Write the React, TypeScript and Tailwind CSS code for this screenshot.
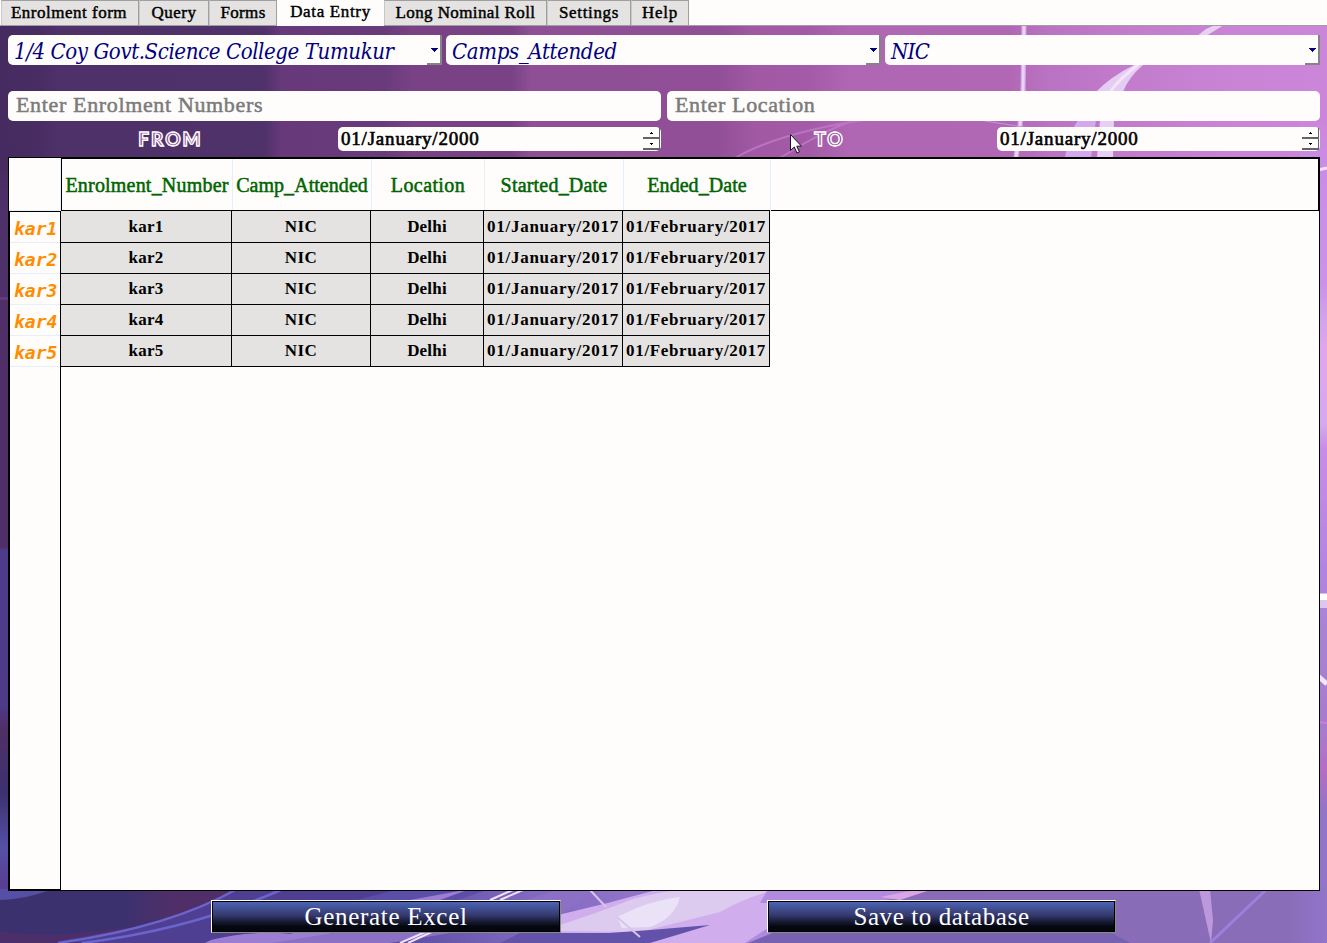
import React from "react";

const tabs = [
  { label: "Enrolment form", box: "w-[138px]", text: "tracking-[0.5px] pr-[2px]" },
  { label: "Query", box: "w-[70px]", text: "tracking-[0.5px]" },
  { label: "Forms", box: "w-[68px]", text: "tracking-[0.35px]" },
  { label: "Data Entry", box: "w-[107px]", text: "tracking-[0.65px]", active: true },
  { label: "Long Nominal Roll", box: "w-[163px]", text: "tracking-[0.4px]" },
  { label: "Settings", box: "w-[84px]", text: "tracking-[0.65px]" },
  { label: "Help", box: "w-[58px]", text: "tracking-[0.8px]" },
];

const rows = ["kar1", "kar2", "kar3", "kar4", "kar5"];

const columns = "grid grid-cols-[171px_139px_113px_139px_147px]";

function Backdrop() {
  return (
    <svg className="absolute inset-0 h-full w-full" viewBox="0 0 1327 943" preserveAspectRatio="none" aria-hidden="true">
      <defs>
        <linearGradient id="top" x1="0" x2="1327" y1="0" y2="0" gradientUnits="userSpaceOnUse">
          <stop offset="0" stopColor="#452b60" />
          <stop offset=".03" stopColor="#482d63" />
          <stop offset=".045" stopColor="#4f3169" />
          <stop offset=".2" stopColor="#50326a" />
          <stop offset=".212" stopColor="#67397a" />
          <stop offset=".29" stopColor="#693b7b" />
          <stop offset=".31" stopColor="#784284" />
          <stop offset=".385" stopColor="#784284" />
          <stop offset=".4" stopColor="#8f4f95" />
          <stop offset=".54" stopColor="#904f96" />
          <stop offset=".57" stopColor="#a259a4" />
          <stop offset=".61" stopColor="#a45ba7" />
          <stop offset=".64" stopColor="#b067b3" />
          <stop offset=".76" stopColor="#b168b4" />
          <stop offset=".79" stopColor="#ba73c2" />
          <stop offset=".85" stopColor="#c27ccb" />
          <stop offset=".93" stopColor="#ca84d6" />
          <stop offset="1" stopColor="#cb86d9" />
        </linearGradient>
        <linearGradient id="left" x1="0" x2="0" y1="150" y2="943" gradientUnits="userSpaceOnUse">
          <stop offset="0" stopColor="#452b60" />
          <stop offset=".08" stopColor="#4e3169" />
          <stop offset=".185" stopColor="#4e3169" />
          <stop offset=".187" stopColor="#733d80" />
          <stop offset=".19" stopColor="#502f69" />
          <stop offset=".5" stopColor="#502f69" />
          <stop offset=".505" stopColor="#4e3c8a" />
          <stop offset=".7" stopColor="#4e3a87" />
          <stop offset=".73" stopColor="#502f68" />
          <stop offset=".81" stopColor="#3c316f" />
          <stop offset=".88" stopColor="#5650a7" />
          <stop offset=".93" stopColor="#563d91" />
          <stop offset="1" stopColor="#433981" />
        </linearGradient>
        <linearGradient id="right" x1="0" x2="0" y1="120" y2="943" gradientUnits="userSpaceOnUse">
          <stop offset="0" stopColor="#cb86d9" />
          <stop offset=".06" stopColor="#c98de8" />
          <stop offset=".2" stopColor="#cc91e8" />
          <stop offset=".24" stopColor="#d1a3eb" />
          <stop offset=".28" stopColor="#e2a5ec" />
          <stop offset=".37" stopColor="#d5a9ee" />
          <stop offset=".4" stopColor="#c88ce7" />
          <stop offset=".55" stopColor="#b184e1" />
          <stop offset=".62" stopColor="#a783d4" />
          <stop offset=".74" stopColor="#a77bcf" />
          <stop offset=".79" stopColor="#b46ec2" />
          <stop offset=".84" stopColor="#9274c9" />
          <stop offset=".93" stopColor="#9274c9" />
          <stop offset="1" stopColor="#896cb7" />
        </linearGradient>
        <linearGradient id="bottom" x1="0" x2="1327" y1="0" y2="0" gradientUnits="userSpaceOnUse">
          <stop offset="0" stopColor="#3c316f" />
          <stop offset=".095" stopColor="#3c316f" />
          <stop offset=".13" stopColor="#502f68" />
          <stop offset=".17" stopColor="#502f68" />
          <stop offset=".19" stopColor="#4e3b87" />
          <stop offset=".3" stopColor="#5a4da3" />
          <stop offset=".4" stopColor="#8069c0" />
          <stop offset=".48" stopColor="#9274c9" />
          <stop offset=".57" stopColor="#b28be0" />
          <stop offset=".64" stopColor="#896cb7" />
          <stop offset=".97" stopColor="#8a6db8" />
          <stop offset="1" stopColor="#9274c9" />
        </linearGradient>
      </defs>
      <rect width="1327" height="160" fill="url(#top)" />
      <rect y="150" width="20" height="750" fill="url(#left)" />
      <rect x="1300" y="120" width="27" height="780" fill="url(#right)" />
      <rect y="889" width="1327" height="54" fill="url(#bottom)" />
      {/* light streaks across the upper edge */}
      <path d="M1024 25 L1023 92 L1020 125 L1016 158" fill="none" stroke="#d9aeea" strokeWidth="5" />
      <path d="M1024 25 L1023 92 L1020 125 L1016 158" fill="none" stroke="#e8d5f4" strokeWidth="2.5" />
      <path d="M1206 29 L1215 25 L1224 25 L1206 36 L1192 40Z" fill="#e8cff4" />
      <path d="M1134 65 L1143 65 Q1128 78 1123 92 L1096 92 Q1110 77 1134 65Z" fill="#e4cdf2" />
      <path d="M1138 65 Q1120 78 1110 92" fill="none" stroke="#f5e3fa" strokeWidth="3" />
      <path d="M1078 120 L1096 120 L1091 158 L1065 158 Q1068 135 1078 120Z" fill="#d4a9ec" />
      <path d="M1100 120 L1114 120 L1113 158 L1097 158Z" fill="#e6cff3" />
      <path d="M735 158 Q780 132 870 119 M780 158 Q825 130 850 122" fill="none" stroke="#c27bcb" strokeWidth="2" opacity=".75" />
      <path d="M985 121 L1030 128" stroke="#c793da" strokeWidth="1" />
      {/* right-hand flares */}
      <path d="M1318 170 L1327 168" stroke="#f3dff8" strokeWidth="3" />
      <path d="M1318 597 L1327 597" stroke="#fff" strokeWidth="7" />
      <path d="M1318 604 L1327 604" stroke="#dfc6ee" strokeWidth="8" />
      <path d="M1318 676 L1327 684" stroke="#f3e5fb" strokeWidth="5" />
      <path d="M1318 722 L1327 723" stroke="#d57bd0" strokeWidth="2" />
      {/* lower-left bands */}
      <path d="M0 880 L52 889 Q30 899 0 900Z" fill="#5a3e91" />
      <path d="M0 900 Q30 898 52 889 L0 889Z" fill="#564fa6" />
      <path d="M0 931 Q20 935 60 935 L150 925 L100 943 L0 943Z" fill="#4c2f6a" />
      <path d="M235 889 Q190 918 110 932 L60 941 L85 943 L330 943 L420 889Z" fill="#4e3f92" />
      <path d="M58 943 Q170 927 237 889 M82 943 Q190 930 283 889" fill="none" stroke="#6b64cb" strokeWidth="2.5" />
      <path d="M230 943 Q330 905 400 889 L490 889 L330 943Z" fill="#5b4ea8" />
      <path d="M211 940 Q250 930 290 934 L410 900 L470 889 L440 900 L300 943 L205 943Z" fill="#9b7ed3" />
      <path d="M272 943 L340 932 L480 915 L560 889 L600 889 L560 915 L390 943Z" fill="#8b70c6" />
      <path d="M400 943 L430 930 M408 943 L436 930 M500 900 L525 889 M490 900 L515 889" fill="none" stroke="#f1dffa" strokeWidth="2" />
      {/* lower-centre glow */}
      <path d="M558 915 Q610 903 660 889 L875 889 L768 928 L745 943 L640 943 L655 932 L558 934Z" fill="#d0adec" />
      <path d="M560 925 Q600 912 630 900 Q665 890 690 889 L780 889 Q750 895 720 912 L640 932 L560 931Z" fill="#dccbef" />
      <path d="M617 917 Q650 900 680 897 Q675 918 650 927 L622 928Z" fill="#eae3f8" />
      <path d="M500 943 L520 933 L610 933 L650 930 L710 925 L650 943Z" fill="#6252aa" />
      <path d="M590 890 L606 907 M617 917 L640 937" fill="none" stroke="#d9c3ed" strokeWidth="2" />
      <path d="M768 889 L935 889 Q900 900 860 903 L760 903Z" fill="#b28ade" />
      <path d="M880 897 L920 889 L933 889 L900 900Z" fill="#d9a5e5" />
      <path d="M748 943 L775 932 L1110 932 L1130 943Z" fill="#7761b1" />
      <path d="M1199 889 L1211 943 L1213 920 L1210 889Z" fill="#bd98dd" />
      <path d="M1210 943 L1267 889" stroke="#9d80d9" strokeWidth="3" />
    </svg>
  );
}

function Combo({ text, className }: { text: string; className: string }) {
  return (
    <div className="flex h-[30px] justify-between rounded-[5px] bg-[#fffdfc] pl-[6px] text-[#000080]">
      <span className={`whitespace-nowrap font-['DejaVu_Serif_Condensed','DejaVu_Serif',serif] text-[22px] italic leading-[33px] [font-stretch:condensed] ${className}`}>{text}</span>
      <span className="flex w-[15px] items-center justify-center border-r-2 border-b-2 border-[#85838a] bg-[#fffdfc]">
        <svg className="mt-[2px] ml-px" width="7" height="4" viewBox="0 0 7 4"><path d="M0 0h7v1H6v1H5v1H4v1H3V3H2V2H1V1H0z" fill="#000080" /></svg>
      </span>
    </div>
  );
}

function DateField() {
  return (
    <div className="flex h-6 justify-between rounded-[5px] bg-[#fffdfc] pl-[3px] text-black">
      <span className="whitespace-nowrap text-[19px] leading-6 tracking-[0.8px] [-webkit-text-stroke:0.6px_#000]">01/January/2000</span>
      <span className="flex w-[18px] flex-col pt-px pr-px pb-px">
        <span className="flex flex-1 items-center justify-center border-r border-b-2 border-[#646464]">
          <svg width="3" height="2"><path d="M1 0h1v1h1v1H0V1h1z" /></svg>
        </span>
        <span className="flex flex-1 items-center justify-center border-r border-b-2 border-[#646464]">
          <svg width="3" height="2"><path d="M0 0h3v1H2v1H1V1H0z" /></svg>
        </span>
      </span>
    </div>
  );
}

function ActionButton({ text, className }: { text: string; className: string }) {
  return (
    <button className="h-[33px] border border-t-white border-l-white border-r-[#8c8a88] border-b-[#8c8a88] bg-black p-px text-white">
      <span className={`block h-full bg-linear-to-b from-[#4a64b4] via-[#363a70] via-45% to-[#05070f] to-85% whitespace-nowrap text-[25px] leading-[30px] ${className}`}>{text}</span>
    </button>
  );
}

export default function App() {
  return (
    <main className="relative h-[943px] w-[1327px] overflow-hidden bg-[#fffdfc] font-['Liberation_Serif',serif]">
      <Backdrop />
      <div className="relative flex h-full flex-col">
        <nav className="flex h-[26px] border-b border-[#a09fa0] bg-[#fffdfc] pl-px">
          {tabs.map((t) => (
            <div
              key={t.label}
              className={`flex shrink-0 justify-center whitespace-nowrap text-[17px] text-black [-webkit-text-stroke:0.45px_#000] ${t.box} ${t.text} ${
                t.active ? "-mb-px h-[26px] bg-[#fffdfc] leading-[24px]" : "h-[25px] border-t border-r border-l border-t-[#a09fa0] border-r-[#a09fa0] border-l-[#c9c8c8] bg-[#e4e3e2] leading-[24px]"
              }`}
            >
              {t.label}
            </div>
          ))}
        </nav>

        <section className="flex flex-col pt-[9px] pr-[7px] pl-2">
          <div className="grid grid-cols-[434px_435px_435px] gap-1">
            <Combo text="1/4 Coy Govt.Science College Tumukur" className="tracking-[-0.4px]" />
            <Combo text="Camps_Attended" className="tracking-[-0.35px]" />
            <Combo text="NIC" className="tracking-[-0.7px]" />
          </div>
          <div className="mt-[26px] grid grid-cols-2 gap-[6px]">
            {["Enter Enrolment Numbers", "Enter Location"].map((p) => (
              <div key={p} className="h-[30px] rounded-[5px] bg-[#fffdfc] pl-2 text-[22px] leading-[28px] tracking-[0.65px] whitespace-nowrap text-[#7b7b7b] [-webkit-text-stroke:0.5px_#7b7b7b]">
                {p}
              </div>
            ))}
          </div>
          <div className="mt-[6px] grid grid-cols-2 gap-[6px]">
            {["FROM", "TO"].map((l) => (
              <div key={l} className="grid grid-cols-[323px_323px] gap-[7px]">
                <span className="pl-[2px] text-center font-['Lato',sans-serif] text-[19px] leading-6 font-black tracking-[2px] text-[#8c4c94] [-webkit-text-stroke:1.4px_#fff]">{l}</span>
                <DateField />
              </div>
            ))}
          </div>
        </section>

        <section className="mt-[6px] ml-2 flex h-[734px] w-[1312px] flex-col border border-black bg-[#fffdfc]">
          <div className="flex h-[53px] shrink-0">
            <div className="w-[52px] border-r border-b border-[#e3effa]" />
            <div className="flex-1 border border-black">
              <div className={`${columns} h-[51px] w-[709px] text-[#006400]`}>
                {[
                  ["Enrolment_Number", "tracking-[0.2px]"],
                  ["Camp_Attended", "tracking-[0.05px]"],
                  ["Location", "tracking-[0.4px]"],
                  ["Started_Date", "tracking-[0.2px]"],
                  ["Ended_Date", "tracking-[0.05px]"],
                ].map(([h, c]) => (
                  <div key={h} className={`flex justify-center border-r border-b border-[#e3effa] text-[20px] leading-[52px] whitespace-nowrap [-webkit-text-stroke:0.5px_#006400] ${c}`}>
                    {h}
                  </div>
                ))}
              </div>
            </div>
          </div>
          <div className="flex min-h-0 flex-1">
            <div className="w-[52px] shrink-0 border border-black">
              {rows.map((r) => (
                <div key={r} className="h-[31px] border-b border-[#e3effa] pl-1 font-['DejaVu_Sans_Mono',monospace] text-[18px] leading-[34px] font-bold text-[#ff8c00] italic">
                  {r}
                </div>
              ))}
            </div>
            <div className="-mt-px w-[709px] border-t border-black">
              {rows.map((r) => (
                <div key={r} className={`${columns} h-[31px] bg-[#e4e3e2] text-center text-[17px] leading-[31px] font-bold whitespace-nowrap text-black`}>
                  <div className="border-r border-b border-black tracking-[0.2px]">{r}</div>
                  <div className="border-r border-b border-black tracking-[0.5px]">NIC</div>
                  <div className="border-r border-b border-black tracking-[0.2px]">Delhi</div>
                  <div className="flex justify-center border-r border-b border-black tracking-[0.75px]">01/January/2017</div>
                  <div className="flex justify-center border-r border-b border-black tracking-[0.65px]">01/February/2017</div>
                </div>
              ))}
            </div>
          </div>
        </section>

        <footer className="mt-[9px] ml-[211px] grid grid-cols-[350px_349px] gap-[206px]">
          <ActionButton text="Generate Excel" className="tracking-[0.7px]" />
          <ActionButton text="Save to database" className="tracking-[0.6px]" />
        </footer>
      </div>
      <svg className="absolute top-[134px] left-[790px]" width="12" height="20" viewBox="0 0 12 20">
        <path d="M.5.5v16l3.8-3.5 2.6 6 2.5-1.1-2.6-5.7h4.7z" fill="#fff" stroke="#181028" />
      </svg>
    </main>
  );
}
